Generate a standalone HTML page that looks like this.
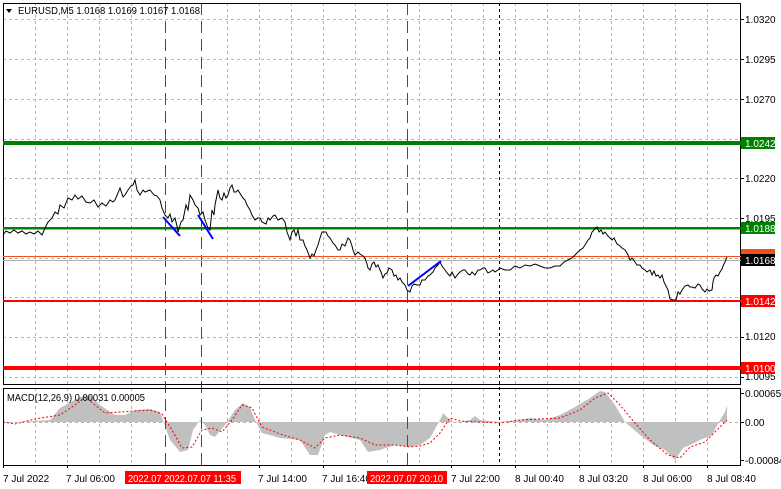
<!DOCTYPE html>
<html><head><style>
body{margin:0;background:#fff;width:781px;height:489px;overflow:hidden}
svg{display:block;font-family:"Liberation Sans",sans-serif;font-size:10px}
</style></head><body>
<svg width="781" height="489" viewBox="0 0 781 489">
<rect width="781" height="489" fill="#fff"/>
<g stroke="#b4b4b4" stroke-dasharray="3 3" stroke-width="1" fill="none">
<path d="M35.5 3V385M67.5 3V385M99.5 3V385M131.5 3V385M227.5 3V385M259.5 3V385M291.5 3V385M323.5 3V385M355.5 3V385M387.5 3V385M419.5 3V385M451.5 3V385M483.5 3V385M515.5 3V385M547.5 3V385M579.5 3V385M611.5 3V385M643.5 3V385M675.5 3V385M707.5 3V385"/>
<path d="M35.5 388V465M67.5 388V465M99.5 388V465M131.5 388V465M227.5 388V465M259.5 388V465M291.5 388V465M323.5 388V465M355.5 388V465M387.5 388V465M419.5 388V465M451.5 388V465M483.5 388V465M515.5 388V465M547.5 388V465M579.5 388V465M611.5 388V465M643.5 388V465M675.5 388V465M707.5 388V465"/>
<path d="M3 19.5H741M3 59.5H741M3 99.5H741M3 139.5H741M3 178.5H741M3 218.5H741M3 258.5H741M3 297.5H741M3 337.5H741M3 377.5H741M3 422.5H741"/>
</g>
<!-- MACD histogram -->
<polygon fill="#c0c0c0" points="3,422 3,423 50,420 60,408 80,397 90,395 100,405 115,415 125,415 135,410 150,409 160,412 163,420 170,440 180,452 188,450 193,430 200,420 205,425 210,435 215,437 225,425 235,410 243,403 250,407 255,420 262,433 280,438 300,440 310,455 318,455 325,435 330,432 340,435 360,440 368,452 380,450 395,445 410,447 420,445 430,438 440,420 443,413 448,418 455,423 470,420 475,416 480,420 500,422 520,420 530,418 545,420 560,415 575,407 590,398 600,391 605,392 615,405 625,422 640,435 655,446 665,450 675,460 683,448 690,445 700,440 712,435 720,420 725,412 727,405 727,422"/>
<polyline fill="none" stroke="#e00" stroke-dasharray="2 2" points="3,422 15,424 35,419 60,415 75,405 85,397 95,405 105,413 120,412 150,410 162,414 172,430 182,448 192,447 202,430 212,428 222,432 232,420 242,405 252,408 262,427 280,434 300,440 315,448 325,438 340,435 360,438 375,445 395,445 410,447 420,446 430,443 440,433 450,418 460,421 480,422 500,423 520,420 560,418 580,410 595,398 608,393 620,405 635,423 650,440 668,455 680,458 690,447 705,442 715,432 727,420"/>
<g stroke="#f00" stroke-dasharray="12 6" stroke-width="1"><path d="M165.5 3V465M201.5 3V465M407.5 3V465"/></g>
<path d="M499.5 3V465" stroke="#000" stroke-dasharray="3 3"/>
<!-- frames -->
<rect x="3.5" y="3.5" width="737" height="381" fill="none" stroke="#000"/>
<rect x="3.5" y="388.5" width="737" height="77" fill="none" stroke="#000"/>
<!-- levels -->
<rect x="3" y="141" width="738" height="4" fill="#008000"/>
<rect x="3" y="227" width="738" height="2.5" fill="#008000"/>
<rect x="3" y="300" width="738" height="2" fill="#f00"/>
<rect x="3" y="366" width="738" height="4" fill="#f00"/>
<path d="M3 256.5H741" stroke="#f05020"/>
<path d="M3 260.5H741" stroke="#b0b0b0"/>
<!-- price -->
<polyline fill="none" stroke="#000" stroke-width="1" points="3,235 6,231 10,233 14,230 18,233 22,231 26,234 30,232 34,234 38,231 42,235 46,226 48,222 52,218 55,212 58,214 60,205 64,208 68,198 72,200 75,195 78,199 82,196 86,202 90,203 94,200 98,207 102,203 106,206 110,200 113,202 115,200 118,193 120,188 123,197 125,195 128,190 131,186 133,185 135,180 137,190 140,195 143,190 145,192 150,190 154,195 157,196 160,200 162,208 165,215 168,218 170,214 172,222 175,218 177,226 178,232 181,222 183,220 186,205 188,210 190,195 193,200 195,205 198,208 200,215 203,212 205,220 208,228 210,230 212,210 214,215 215,205 218,190 220,198 222,200 224,193 226,198 228,195 230,188 232,185 234,192 236,192 238,190 241,195 243,198 245,200 247,205 250,210 252,215 255,220 258,218 260,218 262,222 266,224 268,218 270,220 273,216 275,215 278,220 282,218 285,222 287,232 290,240 292,232 294,230 296,236 298,230 300,240 303,240 305,246 307,250 310,258 312,254 314,256 316,250 318,245 320,238 322,232 326,232 328,236 330,238 333,243 335,245 338,250 340,250 342,244 345,246 348,238 350,240 352,246 353,250 355,255 358,252 360,254 363,256 365,258 367,264 368,268 370,270 372,264 374,262 376,267 378,265 380,270 381,272 383,278 385,274 387,273 389,268 392,270 394,276 396,275 398,280 400,278 402,282 405,285 407,290 410,292 412,286 414,284 417,285 420,285 422,280 425,280 428,276 430,275 433,272 435,268 438,265 440,262 442,266 445,270 448,274 450,276 452,272 455,278 458,274 460,272 463,270 465,270 468,274 470,275 472,272 475,275 478,270 480,270 483,268 485,268 488,273 490,272 493,270 495,272 498,270 500,268 505,270 510,270 515,266 520,268 525,265 530,266 535,264 540,266 545,268 550,268 555,266 560,266 564,262 568,260 572,258 575,255 578,252 580,250 583,248 585,245 588,240 590,238 592,232 594,230 597,227 599,232 601,230 603,234 605,232 608,236 610,238 612,240 614,238 617,244 620,246 622,248 625,250 627,253 628,255 630,260 632,258 635,262 637,265 640,265 642,268 645,270 647,272 650,270 652,275 654,271 656,276 658,275 660,278 662,275 664,282 666,286 668,290 670,299 673,300 676,300 678,292 680,294 682,290 685,286 688,285 690,287 692,287 695,288 698,284 700,285 702,289 703,290 705,292 707,289 709,291 712,290 713,282 714,278 716,275 718,276 720,272 722,269 723,266 725,262 727,257"/>
<g stroke="#00f" stroke-width="2"><path d="M163 217L180 236M198 215L213 239M408 286L441 261"/></g>
<!-- title -->
<path d="M6 9h6l-3 4z" fill="#000"/>
<text x="18" y="14" fill="#000" textLength="182" lengthAdjust="spacingAndGlyphs">EURUSD,M5  1.0168 1.0169 1.0167 1.0168</text>
<text x="7" y="401" fill="#000" textLength="138" lengthAdjust="spacingAndGlyphs">MACD(12,26,9) 0.00031 0.00005</text>
<!-- right axis -->
<g fill="#000">
<text x="745" y="23">1.0320</text><text x="745" y="63">1.0295</text><text x="745" y="103">1.0270</text>
<text x="745" y="182">1.0220</text><text x="745" y="222">1.0195</text>
<text x="745" y="340">1.0120</text><text x="745" y="380">1.0095</text>
<text x="745" y="397">0.00065</text><text x="745" y="426">0.00</text><text x="745" y="464">-0.00084</text>
</g>
<g stroke="#000"><path d="M741 19.5h3M741 59.5h3M741 99.5h3M741 178.5h3M741 218.5h3M741 337.5h3M741 377.5h3M741 393.5h3M741 422.5h3M741 460.5h3"/></g>
<rect x="741" y="137" width="34" height="12" fill="#008000"/><text x="745" y="147" fill="#fff">1.0242</text>
<rect x="741" y="222" width="34" height="12" fill="#008000"/><text x="745" y="232" fill="#fff">1.0188</text>
<rect x="741" y="249" width="34" height="6" fill="#f05020"/>
<rect x="741" y="254" width="34" height="12" fill="#000"/><text x="745" y="264" fill="#fff">1.0168</text>
<rect x="741" y="295" width="34" height="12" fill="#f00"/><text x="745" y="305" fill="#fff">1.0142</text>
<rect x="741" y="362" width="34" height="12" fill="#f00"/><text x="745" y="372" fill="#fff">1.0100</text>
<!-- bottom axis -->
<g stroke="#000"><path d="M3.5 465v3M67.5 465v3M259.5 465v3M323.5 465v3M451.5 465v3M515.5 465v3M579.5 465v3M643.5 465v3M707.5 465v3"/></g>
<g fill="#000">
<text x="3" y="482">7 Jul 2022</text><text x="66" y="482">7 Jul 06:00</text>
<text x="258" y="482">7 Jul 14:00</text><text x="322" y="482">7 Jul 16:40</text>
<text x="451" y="482">7 Jul 22:00</text><text x="515" y="482">8 Jul 00:40</text>
<text x="579" y="482">8 Jul 03:20</text><text x="643" y="482">8 Jul 06:00</text><text x="707" y="482">8 Jul 08:40</text>
</g>
<rect x="125" y="471" width="116" height="13" fill="#f00"/><text x="128" y="482" fill="#fff" textLength="108" lengthAdjust="spacingAndGlyphs">2022.07 2022.07.07 11:35</text>
<rect x="367" y="471" width="80" height="13" fill="#f00"/><text x="370" y="482" fill="#fff" textLength="73" lengthAdjust="spacingAndGlyphs">2022.07.07 20:10</text>
</svg>
</body></html>
